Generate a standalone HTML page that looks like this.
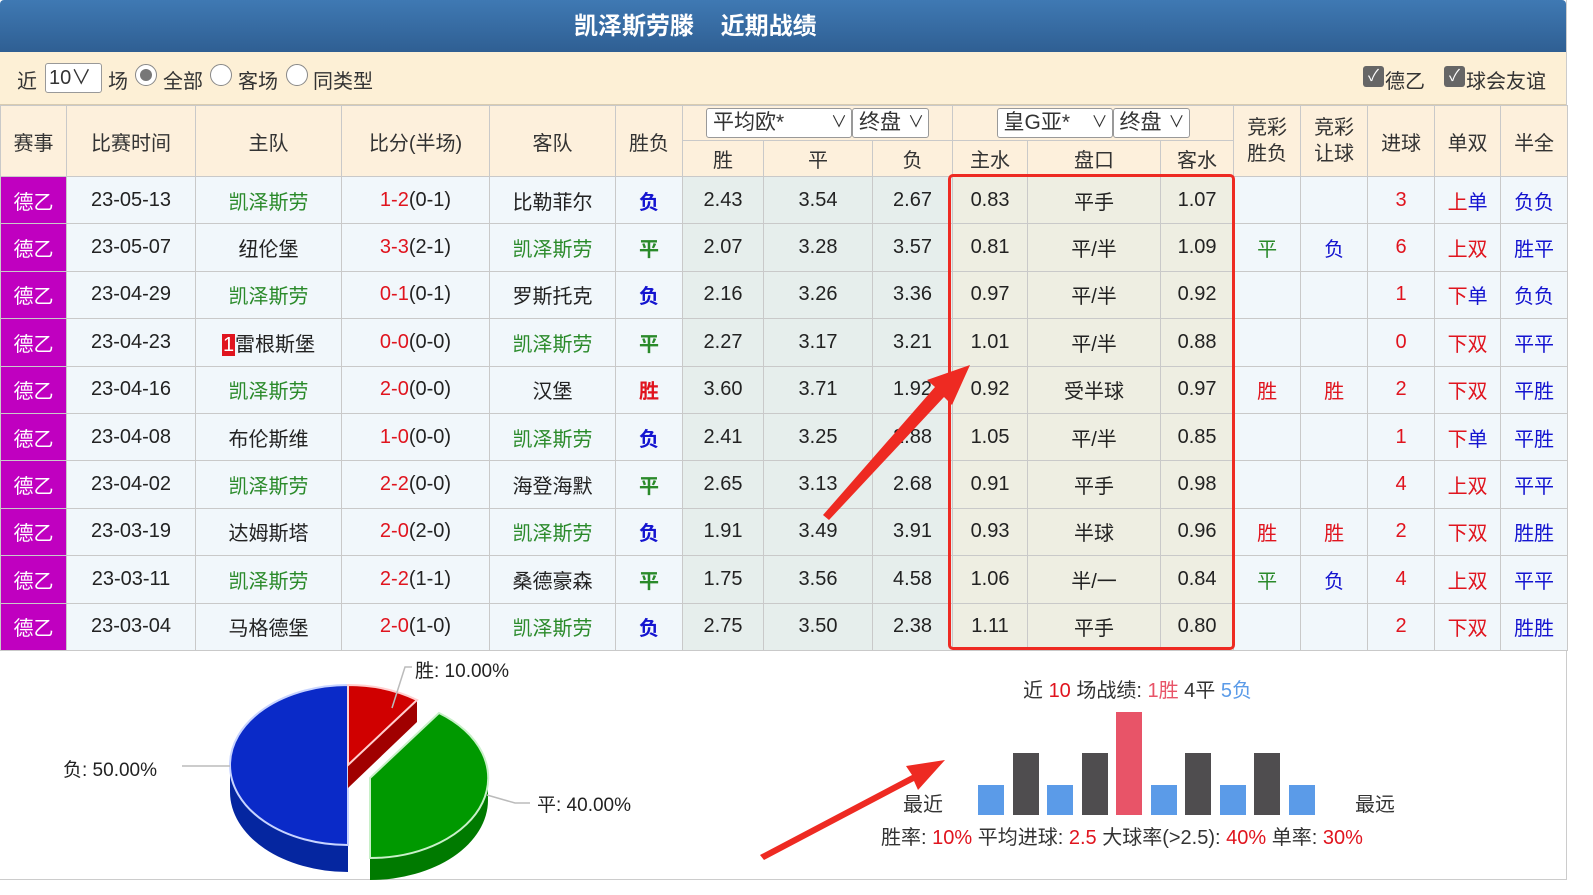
<!DOCTYPE html>
<html><head><meta charset="utf-8">
<style>
*{margin:0;padding:0;box-sizing:border-box}
body{width:1593px;height:895px;background:#fff;font-family:"Liberation Sans","Noto Sans CJK SC",sans-serif;font-size:20px;color:#222;position:relative;overflow:hidden}
#wrap{position:absolute;left:0;top:0;width:1567px;height:880px;border-right:1px solid #ccc;border-bottom:1px solid #ccc}
#title{height:52px;background:linear-gradient(#3f79b3,#2f5f93);color:#fff;font-weight:bold;font-size:24px;line-height:54px;border-radius:4px 4px 0 0;position:relative}
#title span{position:absolute;left:574px;top:0;white-space:pre}
#filter{height:53px;background:#fdf0d6;border-bottom:1px solid #d8cbb0;position:relative;font-size:20px;color:#333}
.sel{position:absolute;border:1px solid #999;border-radius:3px;background:#fff;padding:0 3px;height:30px;line-height:28px}
.rad{position:absolute;width:22px;height:22px;border:1px solid #888;border-radius:50%;background:#fff}
.rad.on::after{content:"";position:absolute;left:4px;top:4px;width:12px;height:12px;border-radius:50%;background:#777}
.t{position:absolute;top:13px}
.chk{position:absolute;top:14px;width:21px;height:21px;background:#666;border-radius:3px;color:#fff;font-size:16px;line-height:21px;text-align:center}
table{border-collapse:collapse;table-layout:fixed;width:1567px;position:absolute;left:0;top:105px}
td,th{border:1px solid #c9c9c9;text-align:center;font-weight:normal;overflow:hidden;white-space:nowrap}
thead td{background:#fdf0dc;color:#333}
tbody td{height:47.4px;background:#f1f7fb}
tbody td.lg{color:#fff;background:#c000c0}
tbody td.o1{background:#e6eeec}
tbody td.o2{background:#eeeee2}
.g{color:#2a8a2a}.r{color:#e0141e}.b{color:#1414d0}
.bd{font-weight:bold}
.bx{display:inline-block;background:#e0141e;color:#fff;width:13px;line-height:22px}
.hs{display:inline-block;border:1px solid #999;border-radius:3px;background:#fff;height:30px;line-height:28px;text-align:left;padding-left:6px;font-size:21px;position:relative;vertical-align:middle}
.hs::after{content:"∨";position:absolute;right:4px;top:0;font-size:16px}
</style></head><body>
<div id="wrap">
<div id="title"><span>凯泽斯劳滕    近期战绩</span></div>
<div id="filter">
<span class="t" style="left:17px">近</span>
<span class="sel" style="left:45px;top:11px;width:57px">10∨</span>
<span class="t" style="left:108px">场</span>
<span class="rad on" style="left:135px;top:12px"></span>
<span class="t" style="left:163px">全部</span>
<span class="rad" style="left:210px;top:12px"></span>
<span class="t" style="left:238px">客场</span>
<span class="rad" style="left:286px;top:12px"></span>
<span class="t" style="left:313px">同类型</span>
<span class="chk" style="left:1363px">✓</span><span class="t" style="left:1385px">德乙</span>
<span class="chk" style="left:1444px">✓</span><span class="t" style="left:1466px">球会友谊</span>
</div>
<table>
<colgroup><col style="width:66px"><col style="width:129px"><col style="width:146px"><col style="width:148px"><col style="width:126px"><col style="width:67px"><col style="width:81px"><col style="width:109px"><col style="width:80px"><col style="width:75px"><col style="width:133px"><col style="width:73px"><col style="width:67px"><col style="width:67px"><col style="width:67px"><col style="width:66px"><col style="width:67px"></colgroup>
<thead>
<tr style="height:35px"><td rowspan="2">赛事</td><td rowspan="2">比赛时间</td><td rowspan="2">主队</td><td rowspan="2">比分(半场)</td><td rowspan="2">客队</td><td rowspan="2">胜负</td>
<td colspan="3"><span class="hs" style="width:146px">平均欧*</span><span class="hs" style="width:77px">终盘</span></td>
<td colspan="3"><span class="hs" style="width:116px">皇G亚*</span><span class="hs" style="width:77px">终盘</span></td>
<td rowspan="2" style="line-height:26px">竞彩<br>胜负</td><td rowspan="2" style="line-height:26px">竞彩<br>让球</td><td rowspan="2">进球</td><td rowspan="2">单双</td><td rowspan="2">半全</td></tr>
<tr style="height:36px"><td>胜</td><td>平</td><td>负</td><td>主水</td><td>盘口</td><td>客水</td></tr>
</thead>
<tbody>
<tr><td class="lg">德乙</td><td>23-05-13</td><td class="g">凯泽斯劳</td><td><span class="r">1-2</span>(0-1)</td><td>比勒菲尔</td><td class="b bd">负</td><td class="o1">2.43</td><td class="o1">3.54</td><td class="o1">2.67</td><td class="o2">0.83</td><td class="o2">平手</td><td class="o2">1.07</td><td></td><td></td><td class="r">3</td><td><span class="r">上</span><span class="b">单</span></td><td class="b">负负</td></tr>
<tr><td class="lg">德乙</td><td>23-05-07</td><td>纽伦堡</td><td><span class="r">3-3</span>(2-1)</td><td class="g">凯泽斯劳</td><td class="g bd">平</td><td class="o1">2.07</td><td class="o1">3.28</td><td class="o1">3.57</td><td class="o2">0.81</td><td class="o2">平/半</td><td class="o2">1.09</td><td class="g">平</td><td class="b">负</td><td class="r">6</td><td class="r">上双</td><td class="b">胜平</td></tr>
<tr><td class="lg">德乙</td><td>23-04-29</td><td class="g">凯泽斯劳</td><td><span class="r">0-1</span>(0-1)</td><td>罗斯托克</td><td class="b bd">负</td><td class="o1">2.16</td><td class="o1">3.26</td><td class="o1">3.36</td><td class="o2">0.97</td><td class="o2">平/半</td><td class="o2">0.92</td><td></td><td></td><td class="r">1</td><td><span class="r">下</span><span class="b">单</span></td><td class="b">负负</td></tr>
<tr><td class="lg">德乙</td><td>23-04-23</td><td><span class="bx">1</span>雷根斯堡</td><td><span class="r">0-0</span>(0-0)</td><td class="g">凯泽斯劳</td><td class="g bd">平</td><td class="o1">2.27</td><td class="o1">3.17</td><td class="o1">3.21</td><td class="o2">1.01</td><td class="o2">平/半</td><td class="o2">0.88</td><td></td><td></td><td class="r">0</td><td class="r">下双</td><td class="b">平平</td></tr>
<tr><td class="lg">德乙</td><td>23-04-16</td><td class="g">凯泽斯劳</td><td><span class="r">2-0</span>(0-0)</td><td>汉堡</td><td class="r bd">胜</td><td class="o1">3.60</td><td class="o1">3.71</td><td class="o1">1.92</td><td class="o2">0.92</td><td class="o2">受半球</td><td class="o2">0.97</td><td class="r">胜</td><td class="r">胜</td><td class="r">2</td><td class="r">下双</td><td class="b">平胜</td></tr>
<tr><td class="lg">德乙</td><td>23-04-08</td><td>布伦斯维</td><td><span class="r">1-0</span>(0-0)</td><td class="g">凯泽斯劳</td><td class="b bd">负</td><td class="o1">2.41</td><td class="o1">3.25</td><td class="o1">2.88</td><td class="o2">1.05</td><td class="o2">平/半</td><td class="o2">0.85</td><td></td><td></td><td class="r">1</td><td><span class="r">下</span><span class="b">单</span></td><td class="b">平胜</td></tr>
<tr><td class="lg">德乙</td><td>23-04-02</td><td class="g">凯泽斯劳</td><td><span class="r">2-2</span>(0-0)</td><td>海登海默</td><td class="g bd">平</td><td class="o1">2.65</td><td class="o1">3.13</td><td class="o1">2.68</td><td class="o2">0.91</td><td class="o2">平手</td><td class="o2">0.98</td><td></td><td></td><td class="r">4</td><td class="r">上双</td><td class="b">平平</td></tr>
<tr><td class="lg">德乙</td><td>23-03-19</td><td>达姆斯塔</td><td><span class="r">2-0</span>(2-0)</td><td class="g">凯泽斯劳</td><td class="b bd">负</td><td class="o1">1.91</td><td class="o1">3.49</td><td class="o1">3.91</td><td class="o2">0.93</td><td class="o2">半球</td><td class="o2">0.96</td><td class="r">胜</td><td class="r">胜</td><td class="r">2</td><td class="r">下双</td><td class="b">胜胜</td></tr>
<tr><td class="lg">德乙</td><td>23-03-11</td><td class="g">凯泽斯劳</td><td><span class="r">2-2</span>(1-1)</td><td>桑德豪森</td><td class="g bd">平</td><td class="o1">1.75</td><td class="o1">3.56</td><td class="o1">4.58</td><td class="o2">1.06</td><td class="o2">半/一</td><td class="o2">0.84</td><td class="g">平</td><td class="b">负</td><td class="r">4</td><td class="r">上双</td><td class="b">平平</td></tr>
<tr><td class="lg">德乙</td><td>23-03-04</td><td>马格德堡</td><td><span class="r">2-0</span>(1-0)</td><td class="g">凯泽斯劳</td><td class="b bd">负</td><td class="o1">2.75</td><td class="o1">3.50</td><td class="o1">2.38</td><td class="o2">1.11</td><td class="o2">平手</td><td class="o2">0.80</td><td></td><td></td><td class="r">2</td><td class="r">下双</td><td class="b">胜胜</td></tr>
</tbody>
</table>
</div>
<div style="position:absolute;left:948px;top:174px;width:287px;height:476px;border:3px solid #ee2a22;border-radius:5px"></div>

<svg width="1593" height="895" style="position:absolute;left:0;top:0" xmlns="http://www.w3.org/2000/svg">
<path d="M230,765 A118,80 0 0 0 348,845 L348,872 A118,80 0 0 1 230,792 Z" fill="#0526a0"/>
<path d="M348,685 A118,80 0 0 0 348,845 Z" fill="#0a2ac8" stroke="#c8d4ff" stroke-width="2"/>
<path d="M488,778 A118,80 0 0 1 370,858 L370,880 A118,80 0 0 0 488,800 Z" fill="#007a00"/>
<path d="M370,778 L439,713 A118,80 0 0 1 370,858 Z" fill="#009900" stroke="#c8f0c8" stroke-width="2"/>
<path d="M348,765 L417,700 L417,722 L348,788 Z" fill="#a00000"/>
<path d="M348,765 L348,685 A118,80 0 0 1 417,700 Z" fill="#d00000" stroke="#ffd0d0" stroke-width="2"/>
<polyline points="392,708 405,667 412,667" fill="none" stroke="#bbb" stroke-width="1.5"/>
<line x1="182" y1="766" x2="230" y2="766" stroke="#bbb" stroke-width="1.5"/>
<polyline points="487,795 515,803 530,803" fill="none" stroke="#bbb" stroke-width="1.5"/>
<text x="415" y="677" font-size="19" fill="#222" font-family="Liberation Sans,Noto Sans CJK SC,sans-serif">胜: 10.00%</text>
<text x="63" y="776" font-size="19" fill="#222" font-family="Liberation Sans,Noto Sans CJK SC,sans-serif">负: 50.00%</text>
<text x="537" y="811" font-size="19" fill="#222" font-family="Liberation Sans,Noto Sans CJK SC,sans-serif">平: 40.00%</text>
<g>
<rect x="978" y="785" width="26" height="30" fill="#5b9be8"/>
<rect x="1013" y="753" width="26" height="62" fill="#4f4d4f"/>
<rect x="1047" y="785" width="26" height="30" fill="#5b9be8"/>
<rect x="1082" y="753" width="26" height="62" fill="#4f4d4f"/>
<rect x="1116" y="712" width="26" height="103" fill="#e85468"/>
<rect x="1151" y="785" width="26" height="30" fill="#5b9be8"/>
<rect x="1185" y="753" width="26" height="62" fill="#4f4d4f"/>
<rect x="1220" y="785" width="26" height="30" fill="#5b9be8"/>
<rect x="1254" y="753" width="26" height="62" fill="#4f4d4f"/>
<rect x="1289" y="785" width="26" height="30" fill="#5b9be8"/>
</g>
<g font-size="20" font-family="Liberation Sans,Noto Sans CJK SC,sans-serif" fill="#333">
<text x="1023" y="697">近 <tspan fill="#e0141e">10</tspan> 场战绩: <tspan fill="#e85468">1胜</tspan> 4平 <tspan fill="#5b9be8">5负</tspan></text>
<text x="903" y="811">最近</text>
<text x="1355" y="811">最远</text>
<text x="881" y="844">胜率: <tspan fill="#e0141e">10%</tspan> 平均进球: <tspan fill="#e0141e">2.5</tspan> 大球率(&gt;2.5): <tspan fill="#e0141e">40%</tspan> 单率: <tspan fill="#e0141e">30%</tspan></text>
</g>
<polygon points="823,515 935,387 927,380 970,365 952,405 944,397 829,520" fill="#ee2a22"/>
<polygon points="760,855 912,775 906,766 945,760 918,790 914,781 764,860" fill="#ee2a22"/>
</svg>
</body></html>
